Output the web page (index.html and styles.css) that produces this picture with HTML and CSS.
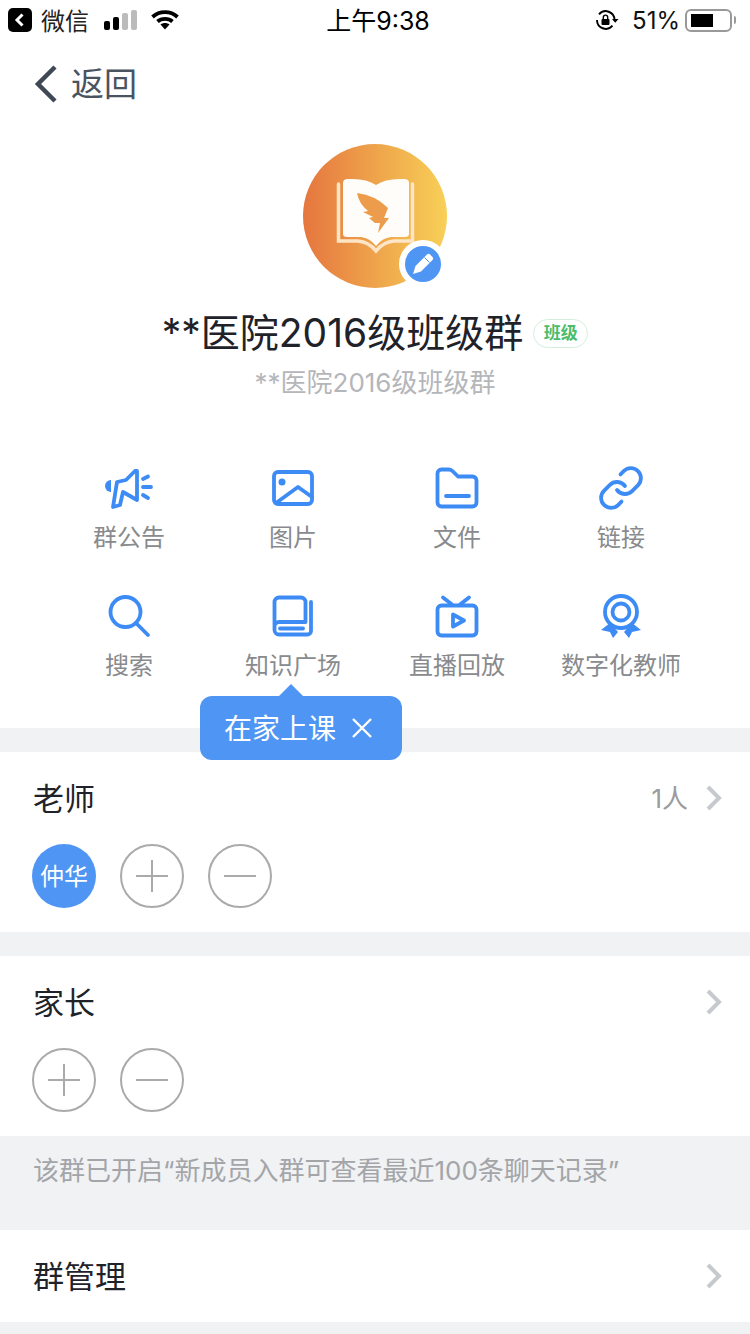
FILE: index.html
```html
<!DOCTYPE html>
<html lang="zh-CN">
<head>
    <meta charset="UTF-8">
    <meta name="viewport" content="width=device-width, initial-scale=1.0">
    <title>群设置</title>
    <link rel="stylesheet" href="styles.css">
</head>
<body>
    <div class="main">
        <div class="status">
            <div class="status-left">
                <div class="wx-back">
                    <svg width="24" height="24" viewBox="0 0 24 24"><path d="M14.500 6.500 9 12l5.500 5.500" fill="none" stroke="#fff" stroke-width="3"/></svg>
                </div>
                <span class="wx-name">微信</span>
                <div class="signal">
                    <i class="bar bar1"></i><i class="bar bar2"></i><i class="bar bar3"></i><i class="bar bar4"></i>
                </div>
                <svg class="wifi" width="28" height="20" viewBox="0 0 28 20">
                    <path d="M1.500 7C8.500 .5 19.500 .5 26.500 7" fill="none" stroke="#000" stroke-width="3.800"/>
                    <path d="M6.500 11.500C10.500 8 17.500 8 21.500 11.500" fill="none" stroke="#000" stroke-width="3.800"/>
                    <path d="M9.500 14.500C12 12.500 16 12.500 18.500 14.500L14 19.500Z" fill="#000"/>
                </svg>
            </div>
            <div class="time">上午9:38</div>
            <div class="status-right">
                <svg class="lock" width="24" height="20" viewBox="0 0 24 20">
                    <path d="M19.500 10A8.800 8.800 0 0 0 4 4.300M2 10a8.800 8.800 0 0 0 15.500 5.700" fill="none" stroke="#000" stroke-width="1.900"/>
                    <path d="M17 9h6.500l-3.300 3.800z" fill="#000"/>
                    <rect x="6.500" y="9" width="8" height="6" rx="1" fill="#000"/>
                    <path d="M8.300 9V7.300a2.200 2.200 0 0 1 4.400 0V9" fill="none" stroke="#000" stroke-width="1.400"/>
                </svg>
                <span class="percent">51%</span>
                <div class="battery"><div class="battery-fill"></div></div>
                <div class="battery-nub"></div>
            </div>
        </div>

        <div class="nav">
            <svg width="24" height="40" viewBox="0 0 24 40"><path d="M21 3 4 20l17 17" fill="none" stroke="#3f4956" stroke-width="4.500"/></svg>
            <span class="nav-text">返回</span>
        </div>

        <div class="head">
            <div class="avatar">
                <svg width="144" height="144" viewBox="0 0 144 144">
                    <path d="M35.500 40V97H55Q66 98 73 107 80 98 91 97H109.500V40" fill="none" stroke="#fde5c6" stroke-width="3.500" stroke-linecap="round"/>
                    <path d="M40 39Q40 35 45 35 63 34 73 41 83 34 101 35 106 35 106 39V90Q106 93 102 93H88Q79 94 73 102 67 94 58 93H44Q40 93 40 90Z" fill="#fffdfa"/>
                    <path d="M54 49Q72 51 85 64L81 74H86L75 89 77 79H72L66 74 70 73 60 68 65 67Q56 60 54 49Z" fill="#ec9c4a"/>
                </svg>
                <div class="avatar-edit">
                    <svg width="36" height="36" viewBox="0 0 36 36">
                        <path d="M8 28 10.500 20 22 8.500Q23.500 7.200 25 8.500L27.500 11Q28.800 12.500 27.500 14L16 25.500Z" fill="#fff"/>
                        <path d="M19.500 11.500 24.500 16.500" stroke="#4f95f3" stroke-width="1"/>
                    </svg>
                </div>
            </div>
            <div class="name-row">
                <span class="name">**医院2016级班级群</span>
                <span class="tag">班级</span>
            </div>
            <p class="subname">**医院2016级班级群</p>
        </div>

        <div class="actions">
            <div class="action">
                <svg class="icon" viewBox="0 0 48 48">
                    <path d="M8 43 12 18 21 16 30 7H32V36L18 28 15 41Z"/>
                    <path d="M6 16a6 6 0 0 0 0 12Z" class="solid"/>
                    <path d="M38 15 43 12.500M38 23H46M38 31 43 34"/>
                </svg>
                <span class="action-label">群公告</span>
            </div>
            <div class="action">
                <svg class="icon" viewBox="0 0 48 48">
                    <rect x="5" y="8" width="38" height="32" rx="4"/>
                    <circle cx="13" cy="18" r="3.500" class="solid"/>
                    <path d="M7 39 29 23 43 33"/>
                </svg>
                <span class="action-label">图片</span>
            </div>
            <div class="action">
                <svg class="icon" viewBox="0 0 48 48">
                    <path d="M8.500 5.500H16Q18 5.500 20 7.500L25 12.500H39.500a4 4 0 0 1 4 4V38.500a4 4 0 0 1-4 4H8.500a4 4 0 0 1-4-4V9.500a4 4 0 0 1 4-4Z"/>
                    <path d="M13 32H36"/>
                </svg>
                <span class="action-label">文件</span>
            </div>
            <div class="action">
                <svg class="icon icon-link" viewBox="0 0 24 24">
                    <path d="M10 13a5 5 0 0 0 7.540.54l3-3a5 5 0 0 0-7.070-7.070l-1.720 1.710"/>
                    <path d="M14 11a5 5 0 0 0-7.540-.54l-3 3a5 5 0 0 0 7.070 7.070l1.710-1.710"/>
                </svg>
                <span class="action-label">链接</span>
            </div>
            <div class="action">
                <svg class="icon" viewBox="0 0 48 48">
                    <circle cx="20.500" cy="20" r="15"/>
                    <path d="M31 31 43 43"/>
                </svg>
                <span class="action-label">搜索</span>
            </div>
            <div class="action">
                <svg class="icon" viewBox="0 0 48 48">
                    <path d="M42 10V39a3.500 3.500 0 0 1-3.500 3.500H10a4.500 4.500 0 0 1-4.500-4.500V10A4.500 4.500 0 0 1 10 5.500H32A4.500 4.500 0 0 1 36.500 10V30H10a4.500 4.500 0 0 0-4.500 4.500"/>
                    <path d="M11 36.500H34"/>
                </svg>
                <span class="action-label">知识广场</span>
            </div>
            <div class="action">
                <svg class="icon" viewBox="0 0 48 48">
                    <rect x="4.500" y="13.500" width="39" height="30" rx="4"/>
                    <path d="M10 5.500 19 12.500M36 5.500 27 12.500"/>
                    <path d="M20 22.500 31 28.500 20 34.500Z"/>
                </svg>
                <span class="action-label">直播回放</span>
            </div>
            <div class="action">
                <svg class="icon" viewBox="0 0 48 48">
                    <circle cx="24" cy="20" r="16"/>
                    <circle cx="24" cy="20" r="8.500"/>
                    <path d="M4 38 13 31 21 40 16 46 13 40ZM44 38 35 31 27 40 32 46 35 40Z" class="solid"/>
                </svg>
                <span class="action-label">数字化教师</span>
            </div>
            <div class="tip">
                <span>在家上课</span>
                <svg width="22" height="22" viewBox="0 0 22 22"><path d="M2 2 20 20M20 2 2 20" fill="none" stroke="#fff" stroke-width="2.400"/></svg>
            </div>
        </div>

        <div class="section section-first">
            <div class="row">
                <span class="row-title">老师</span>
                <span class="row-count">1人</span>
                <svg class="chevron" width="18" height="26" viewBox="0 0 18 26"><path d="M3 2 14 13 3 24" fill="none" stroke="#c6c9ce" stroke-width="4"/></svg>
            </div>
            <div class="members">
                <div class="member"><span>仲华</span></div>
                <div class="circle"><svg width="32" height="32" viewBox="0 0 32 32"><path d="M0 16H32M16 0V32" stroke="#aaa" stroke-width="2"/></svg></div>
                <div class="circle"><svg width="32" height="32" viewBox="0 0 32 32"><path d="M0 16H32" stroke="#aaa" stroke-width="2"/></svg></div>
            </div>
        </div>

        <div class="section">
            <div class="row">
                <span class="row-title">家长</span>
                <svg class="chevron" width="18" height="26" viewBox="0 0 18 26"><path d="M3 2 14 13 3 24" fill="none" stroke="#c6c9ce" stroke-width="4"/></svg>
            </div>
            <div class="members">
                <div class="circle"><svg width="32" height="32" viewBox="0 0 32 32"><path d="M0 16H32M16 0V32" stroke="#aaa" stroke-width="2"/></svg></div>
                <div class="circle"><svg width="32" height="32" viewBox="0 0 32 32"><path d="M0 16H32" stroke="#aaa" stroke-width="2"/></svg></div>
            </div>
        </div>

        <p class="note">该群已开启“新成员入群可查看最近100条聊天记录”</p>

        <div class="section section-last">
            <div class="row">
                <span class="row-title">群管理</span>
                <svg class="chevron" width="18" height="26" viewBox="0 0 18 26"><path d="M3 2 14 13 3 24" fill="none" stroke="#c6c9ce" stroke-width="4"/></svg>
            </div>
        </div>
    </div>
</body>
</html>
```

FILE: styles.css
```css
body {
    font-family: Inter, "Noto Sans CJK SC", sans-serif;
    margin: 0;
    background-color: #f1f2f4;
}
.main {
    width: 750px;
    height: 1334px;
    overflow: hidden;
}
.status {
    display: grid;
    grid-template-columns: 1fr auto 1fr;
    align-items: center;
    height: 40px;
    background-color: #fff;
    color: #000;
}
.status-left {
    display: flex;
    align-items: center;
    padding-left: 8px;
}
.wx-back {
    display: flex;
    width: 24px;
    height: 24px;
    border-radius: 5px;
    background-color: #000;
}
.wx-name {
    margin: -2px 0 0 9px;
    font-size: 24px;
    color: #222;
}
.signal {
    display: flex;
    align-items: flex-end;
    gap: 3px;
    height: 20px;
    margin-left: 15px;
}
.bar {
    width: 6px;
    border-radius: 2px;
    background-color: #000;
}
.bar1 { height: 9px; }
.bar2 { height: 13px; }
.bar3 { height: 17px; background-color: #bbb; }
.bar4 { height: 20px; background-color: #bbb; }
.wifi {
    margin-left: 14px;
}
.time {
    margin: -2px 0 0 6px;
    font-size: 25px;
}
.status-right {
    display: flex;
    align-items: center;
    justify-content: flex-end;
    padding-right: 14px;
}
.percent {
    margin-left: 13px;
    font-size: 24px;
    color: #111;
}
.battery {
    box-sizing: border-box;
    width: 47px;
    height: 23px;
    margin-left: 5px;
    padding: 3px 4px;
    border: 2px solid #999;
    border-radius: 6px;
}
.battery-fill {
    width: 22px;
    height: 100%;
    background-color: #000;
}
.battery-nub {
    width: 2px;
    height: 8px;
    margin-left: 2px;
    border-radius: 0 2px 2px 0;
    background-color: #999;
}
.nav {
    display: flex;
    align-items: center;
    height: 88px;
    padding-left: 34px;
    background-color: #fff;
}
.nav-text {
    margin: -4px 0 0 13px;
    font-size: 33px;
    color: #4a5360;
}
.head {
    display: flex;
    flex-direction: column;
    align-items: center;
    height: 336px;
    padding-top: 16px;
    box-sizing: border-box;
    background-color: #fff;
}
.avatar {
    position: relative;
    width: 144px;
    height: 144px;
    border-radius: 50%;
    background: linear-gradient(90deg, #e5763f, #f8d057);
}
.avatar-edit {
    position: absolute;
    left: 96px;
    top: 96px;
    width: 36px;
    height: 36px;
    border: 6px solid #fff;
    border-radius: 50%;
    background-color: #4f95f3;
}
.name-row {
    display: flex;
    align-items: center;
    margin-top: 14px;
    height: 56px;
}
.name {
    font-size: 39px;
    color: #1f2329;
}
.tag {
    box-sizing: border-box;
    width: 55px;
    height: 29px;
    margin: 6px 0 0 10px;
    border: 1px solid #d5eedc;
    border-radius: 15px;
    font-size: 17px;
    font-weight: bold;
    line-height: 27px;
    text-align: center;
    color: #4cbb6a;
}
.subname {
    margin: 7px 0 0;
    font-size: 26px;
    line-height: 36px;
    color: #b4b6ba;
}
.actions {
    position: relative;
    display: grid;
    grid-template-columns: repeat(4, 164px);
    grid-auto-rows: 128px;
    height: 264px;
    padding-left: 47px;
    background-color: #fff;
}
.action {
    display: flex;
    flex-direction: column;
    align-items: center;
}
.icon {
    width: 48px;
    height: 48px;
    fill: none;
    stroke: #3d8bf5;
    stroke-width: 3.800;
    stroke-linecap: round;
    stroke-linejoin: round;
}
.icon-link {
    stroke-width: 1.900;
}
.icon .solid {
    fill: #3d8bf5;
    stroke: none;
}
.action-label {
    margin-top: 8px;
    font-size: 24px;
    line-height: 36px;
    white-space: nowrap;
    color: #888a8d;
}
.tip {
    position: absolute;
    left: 200px;
    top: 232px;
    display: flex;
    align-items: center;
    box-sizing: border-box;
    width: 202px;
    height: 64px;
    padding-left: 24px;
    border-radius: 12px;
    background-color: #4f95f3;
    font-size: 28px;
    color: #fff;
}
.tip span {
    margin-top: -2px;
}
.tip::before {
    content: "";
    position: absolute;
    left: 79px;
    top: -12px;
    border-left: 12px solid transparent;
    border-right: 12px solid transparent;
    border-bottom: 12px solid #4f95f3;
}
.tip svg {
    margin-left: 15px;
}
.section {
    margin-top: 24px;
    padding-bottom: 24px;
    background-color: #fff;
}
.section-last {
    margin-top: 0;
    padding-bottom: 0;
}
.row {
    display: flex;
    align-items: center;
    height: 92px;
    padding: 0 27px 0 33px;
}
.row-title {
    flex: 1;
    margin-top: -4px;
    font-size: 31px;
    color: #1f2329;
}
.row-count {
    margin: -4px 17px 0 0;
    font-size: 26px;
    color: #999b9f;
}
.members {
    display: flex;
    gap: 24px;
    padding-left: 32px;
}
.member, .circle {
    display: flex;
    align-items: center;
    justify-content: center;
    box-sizing: border-box;
    width: 64px;
    height: 64px;
    border-radius: 50%;
}
.member {
    padding-bottom: 3px;
    background-color: #4f95f3;
    font-size: 24px;
    color: #fff;
}
.circle {
    border: 2px solid #aaa;
}
.note {
    box-sizing: border-box;
    height: 94px;
    margin: 0;
    padding: 17px 33px 0;
    font-size: 26px;
    line-height: 36px;
    white-space: nowrap;
    color: #a3a5a9;
}
```
